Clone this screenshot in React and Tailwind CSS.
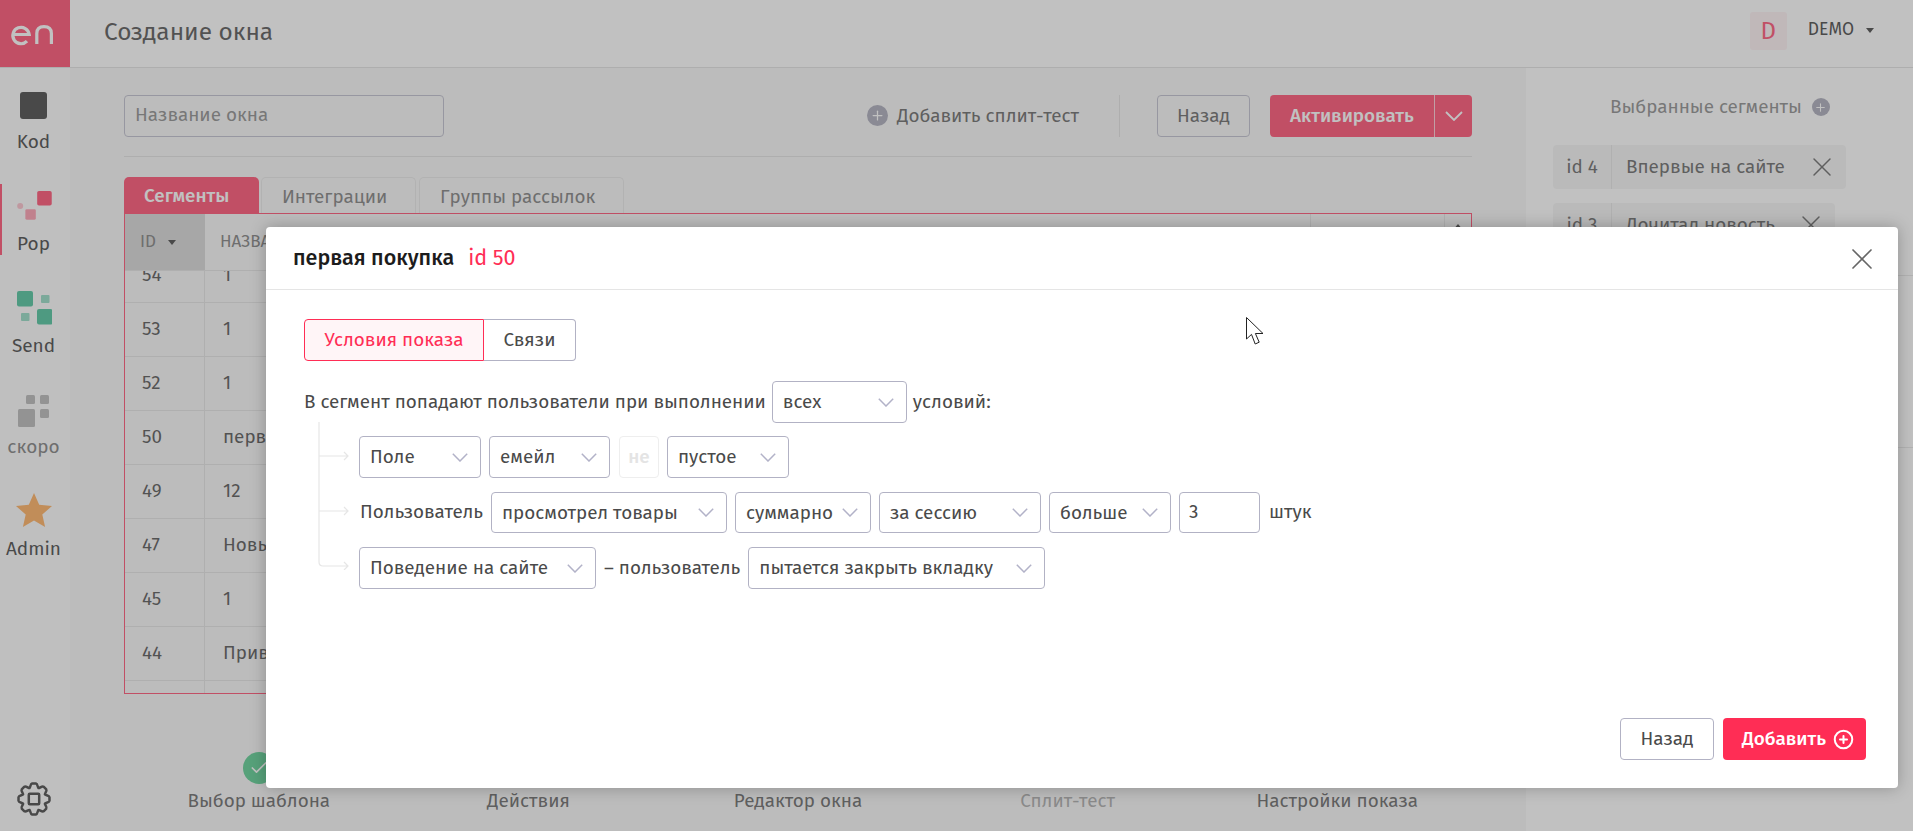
import React from "react";
import { X, Plus, CirclePlus, Check } from "lucide-react";

const font = "font-['Fira_Sans','Roboto','Liberation_Sans',sans-serif]";

const rows = [
  ["54", "1"],
  ["53", "1"],
  ["52", "1"],
  ["50", "первая покупка"],
  ["49", "12"],
  ["47", "Новый сегмент"],
  ["45", "1"],
  ["44", "Привет"],
  ["", ""],
];

// контур шестерёнки: 8 зубцов вокруг центра (18, 18)
const gearPath = () => {
  const pt = (deg, r) => {
    const a = (deg * Math.PI) / 180;
    return `${(18 + r * Math.cos(a)).toFixed(2)} ${(18 + r * Math.sin(a)).toFixed(2)}`;
  };
  let d = `M${pt(-112.5, 11.8)}`;
  for (let i = 0; i < 8; i++) {
    const a = -90 + i * 45;
    d += `C${pt(a - 17, 12)} ${pt(a - 14, 15.6)} ${pt(a - 7, 15.6)}`;
    d += `L${pt(a + 7, 15.6)}`;
    d += `C${pt(a + 14, 15.6)} ${pt(a + 17, 12)} ${pt(a + 22.5, 11.8)}`;
  }
  return d + "Z";
};

const Caret = () => (
  <span className="ml-[12px] inline-block border-x-[4px] border-t-[5px] border-x-transparent border-t-[#222]" />
);

const NavLabel = ({ children, muted, className = "" }) => (
  <span className={`block text-[19px] leading-[22px] ${muted ? "text-[#666]" : "text-[#222]"} ${className}`}>{children}</span>
);

const Sidebar = () => (
  <aside className="relative flex h-full w-[70px] shrink-0 flex-col items-center bg-[#fbfbfb] pr-[3px]">
    <div className="flex h-[116px] w-full flex-col items-center pt-[24px]">
      <div className="h-[27px] w-[27px] rounded-[3px] bg-[#222]" />
      <NavLabel className="mt-[12px]">Kod</NavLabel>
    </div>
    <div className="flex h-[71px] w-full flex-col items-center border-l-[2px] border-[#ff2d55] pt-[7px]">
      <svg width="40" height="33" viewBox="0 0 40 33" className="-ml-[2px]">
        <rect x="23.5" y="0" width="16" height="16" rx="2" fill="#ff2d55" />
        <rect x="10.5" y="20" width="11.5" height="11.5" rx="1.5" fill="#ff2d55" opacity=".55" />
        <circle cx="4.8" cy="16.5" r="3.3" fill="#ff2d55" opacity=".35" />
      </svg>
      <NavLabel className="-ml-[2px] mt-[12px]">Pop</NavLabel>
    </div>
    <div className="mt-[36px] flex w-full flex-col items-center">
      <svg width="36" height="34" viewBox="0 0 36 34">
        <rect x="1" y="0" width="16" height="15.5" rx="2" fill="#2bb88a" />
        <rect x="25" y="4" width="8.5" height="8" rx="1" fill="#2bb88a" opacity=".6" />
        <rect x="5" y="22" width="8.5" height="8" rx="1" fill="#2bb88a" opacity=".6" />
        <rect x="21" y="18" width="15.5" height="15.5" rx="2" fill="#2bb88a" />
      </svg>
      <NavLabel className="mt-[10px]">Send</NavLabel>
    </div>
    <div className="mt-[38px] flex w-full flex-col items-center">
      <svg width="32" height="32" viewBox="0 0 32 32">
        <rect x="8" y="0" width="9" height="9" rx="1.5" fill="#aaa" />
        <rect x="22" y="0" width="9" height="9" rx="1.5" fill="#aaa" />
        <rect x="0" y="14" width="17" height="18" rx="1.5" fill="#aaa" />
        <rect x="22" y="14" width="9" height="9" rx="1.5" fill="#aaa" />
      </svg>
      <NavLabel muted className="mt-[9px]">скоро</NavLabel>
    </div>
    <div className="mt-[35px] flex w-full flex-col items-center">
      <svg width="36" height="34" viewBox="0 0 36 34">
        <polygon points="18,0 23.2,11.8 36,13 26.3,21.5 29.1,34 18,27.4 6.9,34 9.7,21.5 0,13 12.8,11.8" fill="#ff9f40" />
      </svg>
      <NavLabel className="mt-[11px]">Admin</NavLabel>
    </div>
    <svg className="mt-auto mb-[14px]" width="36" height="36" viewBox="0 0 36 36" fill="none" stroke="#222" strokeWidth="2.5" strokeLinejoin="round">
      <path d={gearPath()} />
      <rect x="12.8" y="12.8" width="10.4" height="10.4" rx="1" />
    </svg>
  </aside>
);

const Toolbar = () => (
  <div className="flex h-[42px] items-center">
    <div className="flex h-full w-[320px] items-center rounded-[4px] border border-[#b2b2c4] px-[10px] pb-[2px] text-[18.85px] text-[#777]">
      Название окна
    </div>
    <div className="ml-auto flex items-center text-[18.85px] text-[#4a4a4a]">
      <span className="flex h-[21px] w-[21px] items-center justify-center rounded-full bg-[#9a9aac]">
        <Plus size={15} color="#fff" strokeWidth={2} />
      </span>
      <span className="ml-[9px]">Добавить сплит-тест</span>
    </div>
    <div className="ml-[40px] h-full w-px bg-[#ddd]" />
    <button className="ml-[37px] h-full w-[93px] rounded-[4px] border border-[#b2b2c4] text-[18.85px] text-[#4a4a4a]">Назад</button>
    <div className="ml-[20px] flex h-full w-[202px] items-stretch rounded-[4px] bg-[#ff2d55] text-white">
      <span className="flex w-[164px] items-center justify-center text-[18.85px] font-medium">Активировать</span>
      <span className="flex flex-1 items-center justify-center border-l border-white/70">
        <svg width="18" height="10" viewBox="0 0 18 10" fill="none" stroke="#fff" strokeWidth="1.8"><path d="M1 1l8 8 8-8" /></svg>
      </span>
    </div>
  </div>
);

const Tabs = () => (
  <div className="flex h-[36px] text-[18.85px]">
    <div className="flex w-[135px] items-center rounded-t-[5px] bg-[#ff2d55] pl-[20px] pt-[3px] font-medium text-white">Сегменты</div>
    <div className="ml-[2px] flex w-[155px] items-center rounded-t-[5px] border border-b-0 border-[#e3e3e3] pl-[20px] pt-[3px] text-[#666]">Интеграции</div>
    <div className="ml-[3px] flex w-[205px] items-center rounded-t-[5px] border border-b-0 border-[#e3e3e3] pl-[20px] pt-[3px] text-[#666]">Группы рассылок</div>
  </div>
);

const SegmentTable = () => (
  <div className="flex h-[481px] flex-col overflow-hidden border border-[#ff2d55] text-[18.85px] text-[#333]">
    <div className="relative z-10 flex h-[57px] shrink-0 border-b border-[#dedede] bg-[#f6f6f6] text-[17px] text-[#666]">
      <div className="flex w-[80px] items-center bg-[#cfcfcf] pl-[15px]">ID<Caret /></div>
      <div className="flex flex-1 items-center pl-[15px]">НАЗВАНИЕ</div>
      <div className="w-[134px] border-l border-[#dedede]" />
      <div className="flex w-[27px] justify-center border-l border-[#dedede] pt-[10px]">
        <span className="h-0 w-0 border-x-[5px] border-b-[6px] border-x-transparent border-b-[#222]" />
      </div>
    </div>
    <div className="-mt-[22px]">
      {rows.map(([id, name], i) => (
        <div key={i} className="flex h-[54px] border-b border-[#dedede]">
          <div className="flex w-[80px] items-center border-r border-[#dedede] pl-[17px]">{id}</div>
          <div className="flex flex-1 items-center pl-[18px]">{name}</div>
        </div>
      ))}
    </div>
  </div>
);

const Steps = () => (
  <div className="mt-[58px] grid grid-cols-5 text-[18.85px] leading-[22px]">
    {[
      ["Выбор шаблона", "text-[#4a4a4a]"],
      ["Действия", "text-[#4a4a4a]"],
      ["Редактор окна", "text-[#4a4a4a]"],
      ["Сплит-тест", "text-[#999]"],
      ["Настройки показа", "text-[#4a4a4a]"],
    ].map(([label, color]) => (
      <div key={label} className="flex flex-col items-center">
        <span className="flex h-[32px] w-[32px] items-center justify-center rounded-full bg-[#3cc47c]">
          <Check size={20} color="#fff" strokeWidth={2} />
        </span>
        <span className={`mt-[6px] ${color}`}>{label}</span>
      </div>
    ))}
  </div>
);

const SegmentChip = ({ id, name, width }) => (
  <div className={`flex h-[44px] items-center rounded-[4px] bg-[#f2f2f2] text-[18.85px] text-[#4a4a4a] ${width}`}>
    <span className="flex h-full w-[59px] items-center justify-center border-r border-[#e0e0e0]">{id}</span>
    <span className="ml-[14px]">{name}</span>
    <X size={32} strokeWidth={1.1} className="ml-auto mr-[8px]" color="#4a4a4a" />
  </div>
);

const RightPanel = () => (
  <aside className="h-full flex-1 bg-white pl-[27px] pt-[26px]">
    <div className="flex items-center pl-[57px] text-[18.85px] leading-[26px] text-[#777]">
      Выбранные сегменты
      <span className="ml-[10px] flex h-[18px] w-[18px] items-center justify-center rounded-full bg-[#9a9aac]">
        <Plus size={13} color="#fff" strokeWidth={2} />
      </span>
    </div>
    <div className="mt-[25px] flex flex-col gap-[14px]">
      <SegmentChip id="id 4" name="Впервые на сайте" width="w-[293px]" />
      <SegmentChip id="id 3" name="Дочитал новость" width="w-[282px]" />
    </div>
    <div className="mt-[28px] h-px bg-[#e3e3e3]" />
    <div className="mt-[171px] h-px bg-[#e3e3e3]" />
  </aside>
);

const Select = ({ children, className = "", height = "h-[42px]" }) => (
  <div className={`flex shrink-0 items-center justify-between rounded-[4px] border border-[#b2b2c4] bg-white pl-[10px] pr-[12px] ${height} ${className}`}>
    <span className="pt-[1px]">{children}</span>
    <svg width="16" height="9" viewBox="0 0 16 9" fill="none" stroke="#b2b2c8" strokeWidth="1.5"><path d="M.8.8 8 8l7.2-7.2" /></svg>
  </div>
);

const TreeLines = () => (
  <svg className="absolute left-[52px] top-[132px]" width="32" height="148" viewBox="0 0 32 148" fill="none" stroke="#e6e6e6" strokeWidth="1.2">
    <path d="M1 0V140q0 4 4 4H30M26 140l4 4-4 4" />
    <path d="M1 34H30M26 30l4 4-4 4" />
    <path d="M1 89H30M26 85l4 4-4 4" />
  </svg>
);

const ConditionModal = () => (
  <div className="absolute left-[266px] top-[227px] z-30 flex h-[561px] w-[1632px] flex-col rounded-[4px] bg-white text-[18.85px] text-[#4a4a4a] shadow-[0_0_16px_rgba(0,0,0,0.25)]">
    <div className="flex h-[63px] shrink-0 items-center border-b border-[#e5e5e5] pl-[27px] pr-[18px]">
      <span className="text-[21.5px] font-medium text-[#1c1c1c]">первая покупка</span>
      <span className="ml-[14px] text-[21.5px] text-[#ff2d55]">id 50</span>
      <X size={36} strokeWidth={1.1} color="#666" className="ml-auto mt-[2px]" />
    </div>
    <div className="relative flex-1 pl-[38px] pt-[29px]">
      <div className="flex h-[42px]">
        <div className="flex w-[180px] items-center justify-center rounded-l-[4px] border border-[#ff2d55] bg-[#fff5f7] text-[#ff2d55]">Условия показа</div>
        <div className="flex w-[92px] items-center justify-center rounded-r-[4px] border border-l-0 border-[#b2b2c4]">Связи</div>
      </div>
      <div className="mt-[20px] flex items-center gap-[6px]">
        <span>В сегмент попадают пользователи при выполнении</span>
        <Select className="w-[135px]">всех</Select>
        <span>условий:</span>
      </div>
      <TreeLines />
      <div className="ml-[55px] mt-[13px] flex flex-col gap-[14px]">
        <div className="flex items-center gap-[8px]">
          <Select className="w-[122px]">Поле</Select>
          <Select className="w-[121px]">емейл</Select>
          <div className="ml-[1px] flex h-[42px] w-[40px] items-center justify-center rounded-[4px] border border-[#eee] font-medium text-[#e4e4e4]">не</div>
          <Select className="w-[122px]">пустое</Select>
        </div>
        <div className="flex items-center gap-[8px]">
          <span className="w-[124px] pl-[1px]">Пользователь</span>
          <Select height="h-[41px]" className="w-[236px]">просмотрел товары</Select>
          <Select height="h-[41px]" className="w-[136px]">суммарно</Select>
          <Select height="h-[41px]" className="w-[162px]">за сессию</Select>
          <Select height="h-[41px]" className="w-[122px]">больше</Select>
          <div className="flex h-[41px] w-[81px] items-center rounded-[4px] border border-[#b2b2c4] pl-[9px]">3</div>
          <span className="ml-[1px]">штук</span>
        </div>
        <div className="flex items-center gap-[8px]">
          <Select className="w-[237px]">Поведение на сайте</Select>
          <span>– пользователь</span>
          <Select className="w-[297px]">пытается закрыть вкладку</Select>
        </div>
      </div>
      <div className="absolute bottom-[28px] right-[32px] flex gap-[9px]">
        <button className="h-[42px] w-[94px] rounded-[4px] border border-[#b2b2c4]">Назад</button>
        <button className="flex h-[42px] w-[143px] items-center gap-[7px] rounded-[4px] bg-[#ff2d55] pl-[19px] font-medium text-white">
          Добавить
          <CirclePlus size={21} strokeWidth={2.3} />
        </button>
      </div>
    </div>
  </div>
);

const Cursor = () => (
  <svg className="absolute left-[1246px] top-[317px] z-40" width="18" height="28" viewBox="0 0 18 28">
    <path d="M.5.5V22l5-4.6L9.2 27l4-1.8-3.8-8.7H17z" fill="#fff" stroke="#222" strokeWidth="1" />
  </svg>
);

export default function App() {
  return (
    <div className={`relative h-[831px] w-[1913px] overflow-hidden bg-white ${font}`}>
      <header className="flex h-[68px] items-center border-b border-[#ddd] bg-white">
        <div className="flex h-full w-[70px] items-center justify-center bg-[#ff2d55]">
          <svg width="70" height="68" viewBox="0 0 70 68" fill="none" stroke="#fff" strokeWidth="3.2">
            <path d="M13.6 34.5H29.2A8.2 8.2 0 1 0 27 41.2" />
            <path d="M36.8 44V33.5Q36.8 26.6 44 26.6Q51.4 26.6 51.4 33.5V44" />
          </svg>
        </div>
        <h1 className="ml-[34px] pb-[2px] text-[24.4px] text-[#333]">Создание окна</h1>
        <div className="ml-auto mr-[39px] flex items-center pb-[6px]">
          <span className="flex h-[38px] w-[37px] items-center justify-center rounded-[3px] bg-[#fdeef1] text-[24px] text-[#ff2d55]">D</span>
          <span className="ml-[21px] text-[17.5px] text-[#222]">DEMO</span>
          <Caret />
        </div>
      </header>
      <div className="flex h-[763px]">
        <Sidebar />
        <main className="h-full w-[1456px] bg-[#f6f6f6] pl-[54px] pr-[54px] pt-[27px]">
          <Toolbar />
          <div className="mt-[19px] h-px bg-[#ddd]" />
          <div className="mt-[20px]"><Tabs /></div>
          <SegmentTable />
          <Steps />
        </main>
        <RightPanel />
      </div>
      {/* затемнение под модалкой */}
      <div className="absolute inset-0 z-20 bg-[#787878]/46" />
      <ConditionModal />
      <Cursor />
    </div>
  );
}
